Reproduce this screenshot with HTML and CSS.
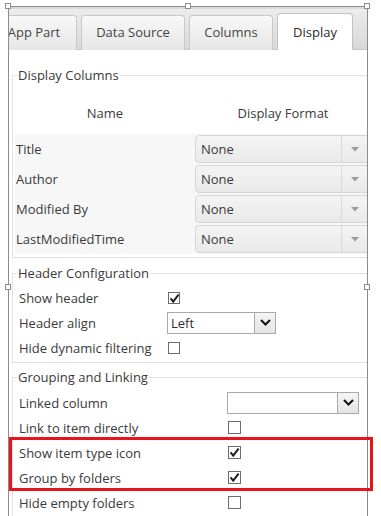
FILE: index.html
```html
<!DOCTYPE html>
<html>
<head>
<meta charset="utf-8">
<link rel="stylesheet" href="styles.css">
</head>
<body>
<div class="frame">
  <div class="clip">
    <div class="tabstrip">
      <div class="tab w-app">App Part</div>
      <div class="tab w-ds">Data Source</div>
      <div class="tab w-col">Columns</div>
      <div class="tab w-disp active">Display</div>
    </div>
    <div class="panel">
      <fieldset class="group g-cols">
        <legend>Display Columns</legend>
        <div class="grid-head">
          <div class="hcell">Name</div>
          <div class="hcell">Display Format</div>
        </div>
        <div class="grid-row"><div class="gcell">Title</div><div class="gcombo"><span class="gval">None</span><span class="gbtn"><svg width="8" height="5" viewBox="0 0 8 5"><polygon points="0,0 8,0 4,4.5" fill="#9b9b9b"/></svg></span></div></div>
        <div class="grid-row"><div class="gcell">Author</div><div class="gcombo"><span class="gval">None</span><span class="gbtn"><svg width="8" height="5" viewBox="0 0 8 5"><polygon points="0,0 8,0 4,4.5" fill="#9b9b9b"/></svg></span></div></div>
        <div class="grid-row"><div class="gcell">Modified By</div><div class="gcombo"><span class="gval">None</span><span class="gbtn"><svg width="8" height="5" viewBox="0 0 8 5"><polygon points="0,0 8,0 4,4.5" fill="#9b9b9b"/></svg></span></div></div>
        <div class="grid-row"><div class="gcell">LastModifiedTime</div><div class="gcombo"><span class="gval">None</span><span class="gbtn"><svg width="8" height="5" viewBox="0 0 8 5"><polygon points="0,0 8,0 4,4.5" fill="#9b9b9b"/></svg></span></div></div>
      </fieldset>

      <fieldset class="group g-head">
        <legend>Header Configuration</legend>
        <div class="frow hc"><span class="flabel">Show header</span><span class="cb"><svg width="13" height="13" viewBox="0 0 13 13"><path d="M2.6 6.4 L5.2 9.6 L10.6 2.6" fill="none" stroke="#1e1e1e" stroke-width="2"/></svg></span></div>
        <div class="frow hc"><span class="flabel">Header align</span><span class="combo c-align"><span class="cval">Left</span><span class="cbtn"><svg width="11" height="7" viewBox="0 0 11 7"><path d="M1 1 L5.5 5.5 L10 1" fill="none" stroke="#111" stroke-width="2"/></svg></span></span></div>
        <div class="frow hc"><span class="flabel">Hide dynamic filtering</span><span class="cb"></span></div>
      </fieldset>

      <fieldset class="group g-link">
        <legend>Grouping and Linking</legend>
        <div class="frow gl"><span class="flabel">Linked column</span><span class="combo c-link"><span class="cval"></span><span class="cbtn"><svg width="11" height="7" viewBox="0 0 11 7"><path d="M1 1 L5.5 5.5 L10 1" fill="none" stroke="#111" stroke-width="2"/></svg></span></span></div>
        <div class="frow gl"><span class="flabel">Link to item directly</span><span class="cb"></span></div>
        <div class="frow gl"><span class="flabel">Show item type icon</span><span class="cb"><svg width="13" height="13" viewBox="0 0 13 13"><path d="M2.6 6.4 L5.2 9.6 L10.6 2.6" fill="none" stroke="#1e1e1e" stroke-width="2"/></svg></span></div>
        <div class="frow gl"><span class="flabel">Group by folders</span><span class="cb"><svg width="13" height="13" viewBox="0 0 13 13"><path d="M2.6 6.4 L5.2 9.6 L10.6 2.6" fill="none" stroke="#1e1e1e" stroke-width="2"/></svg></span></div>
        <div class="frow gl"><span class="flabel">Hide empty folders</span><span class="cb"></span></div>
        <div class="frow gl"><span class="flabel">&nbsp;</span><span class="combo c-link"><span class="cval"></span><span class="cbtn"></span></span></div>
      </fieldset>
    </div>
  </div>
  <span class="handle h-tl"></span>
  <span class="handle h-tm"></span>
  <span class="handle h-tr"></span>
  <span class="handle h-ml"></span>
  <span class="handle h-mr"></span>
  <div class="highlight"></div>
</div>
</body>
</html>
```

FILE: styles.css
```css
* { box-sizing: border-box; }
html, body { margin: 0; padding: 0; background: #fff; }
body {
  font-family: "Open Sans", "Noto Sans", sans-serif;
  font-size: 13px;
  color: #3a3a3a;
  overflow: hidden;
  height: 516px;
}
.frame {
  position: relative;
  margin: 6px 0 0 8px;
  width: 360px;
  height: 520px;
  border: 1px solid #8c8c8c;
  border-bottom: none;
}
.clip {
  width: 100%;
  height: 100%;
  overflow: hidden;
}
.tabstrip {
  height: 43px;
  display: flex;
  align-items: flex-end;
  gap: 4px;
  margin-left: -18px;
  background: linear-gradient(#ececec, #d8d8d8);
  border-top: 2px solid #dcdcdc;
  border-bottom: 1px solid #c8c8c8;
}
.tab {
  flex: none;
  height: 35px;
  display: flex;
  align-items: center;
  justify-content: center;
  padding-bottom: 2px;
  border: 1px solid #c9c9c9;
  border-bottom: none;
  border-radius: 4px 4px 0 0;
  background: linear-gradient(#f8f8f8, #e6e6e6);
  color: #454545;
  font-size: 13px;
  margin-bottom: -1px;
}
.tab.active {
  height: 37px;
  padding-bottom: 0;
  background: #fff;
  border-color: #c2c2c2;
  color: #2a2a2a;
}
.w-app { width: 86px; }
.w-ds { width: 104px; }
.w-col { width: 84px; }
.w-disp { width: 76px; }

.panel {
  padding-left: 3px;
}
.group {
  margin: 0;
  padding: 0;
  width: 420px;
  border: 1px solid #e2e2e2;
  border-right: none;
  min-width: 0;
}
.group legend {
  margin-left: 4px;
  padding: 0 1px;
  line-height: 18px;
  height: 18px;
  font-size: 13px;
}
.g-cols { margin-top: 16px; padding-bottom: 3px; }
.g-head { margin-top: 6px; padding-top: 3px; padding-bottom: 2px; }
.g-link { margin-top: 5px; padding-top: 4px; }

.grid-head {
  display: flex;
  height: 50px;
  padding-top: 8px;
  align-items: center;
  margin-left: 2px;
}
.hcell { text-align: center; }
.hcell:first-child { width: 180px; }
.hcell:last-child { width: 176px; }

.grid-row {
  display: flex;
  height: 30px;
  margin-left: 2px;
  align-items: center;
  background: #f7f7f7;
}
.gcell {
  width: 180px;
  padding-left: 1px;
}
.gcombo {
  width: 178px;
  height: 28px;
  display: flex;
  align-items: center;
  border: 1px solid #d6d6d6;
  border-radius: 4px;
  background: linear-gradient(#f4f4f4, #e9e9e9);
}
.gval { flex: 1; padding-left: 5px; color: #3a3a3a; }
.gbtn {
  width: 31px;
  height: 100%;
  display: flex;
  align-items: center;
  justify-content: center;
  padding-right: 4px;
  border-left: 1px solid #dadada;
}
.gbtn svg { display: block; }

.frow {
  display: flex;
  align-items: center;
  height: 25px;
  padding-left: 6px;
}
.hc .flabel { width: 149px; flex: none; }
.gl .flabel { width: 209px; flex: none; }
.cb {
  width: 13px;
  height: 13px;
  border: 1px solid #6c6c6c;
  background: #fff;
  position: relative;
}
.hc .cb { width: 12px; height: 12px; }
.cb svg { display: block; position: absolute; left: -1px; top: -1px; }

.combo {
  display: flex;
  height: 22px;
  border: 1px solid #a9a9a9;
  background: #fff;
}
.c-align { width: 109px; margin-left: -1px; }
.c-link { width: 132px; margin-left: -1px; }
.cval { flex: 1; padding-left: 3px; line-height: 20px; color: #2e2e2e; }
.cbtn {
  width: 21px;
  display: flex;
  align-items: center;
  justify-content: center;
  border-left: 1px solid #a9a9a9;
  background: linear-gradient(#f6f6f6, #e4e4e4);
}
.cbtn svg { display: block; }

.handle {
  position: absolute;
  width: 6px;
  height: 6px;
  border: 1px solid #8c8c8c;
  background: #fff;
}
.h-tl { left: -4px; top: -4px; }
.h-tm { left: 176px; top: -4px; }
.h-tr { left: 355px; top: -4px; }
.h-ml { left: -4px; top: 277px; }
.h-mr { left: 355px; top: 277px; }

.highlight {
  position: absolute;
  left: 0px;
  top: 430px;
  width: 364px;
  height: 54px;
  border: 3px solid #e8141c;
}
```
